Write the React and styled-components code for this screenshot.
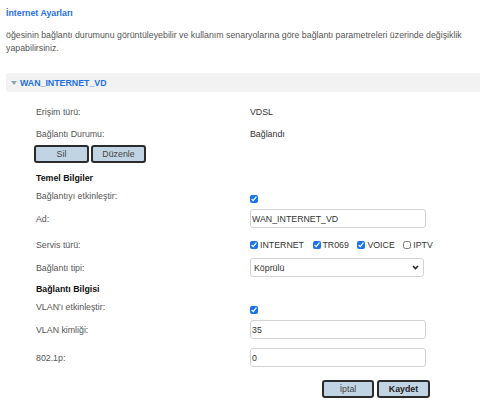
import React from 'react'
import styled, { createGlobalStyle } from 'styled-components'

const GlobalStyle = createGlobalStyle`
  body {
    margin: 0;
    background: #fff;
    font-family: "Liberation Sans", Arial, sans-serif;
    font-size: 8.8px;
    color: #555;
  }
`

const Page = styled.div`
  padding: 8px 0 20px 6px;
`

const Title = styled.h1`
  margin: 0;
  font-size: 8.8px;
  line-height: 10px;
  font-weight: bold;
  color: #1f6fe5;
`

const Desc = styled.p`
  margin: 10.5px 0 0;
  line-height: 13px;
  color: #555;
`

const Bar = styled.div`
  margin-top: 18.5px;
  height: 19px;
  background: #f2f2f2;
  border-radius: 3px 0 0 3px;
  display: flex;
  align-items: center;
  padding-left: 5px;
  gap: 3px;
`

const Caret = styled.span`
  width: 0;
  height: 0;
  border-left: 3px solid transparent;
  border-right: 3px solid transparent;
  border-top: 4px solid #8ea3bb;
  margin-top: 1px;
`

const BarTitle = styled.span`
  font-weight: bold;
  color: #1f6fe5;
`

const Form = styled.div`
  margin-left: 30px;
  padding-top: 9px;
  display: flex;
  flex-direction: column;
`

const Row = styled.div`
  display: grid;
  grid-template-columns: 214px 1fr;
  height: ${p => p.$h}px;
  margin-top: ${p => p.$mt || 0}px;
  align-items: ${p => (p.$top ? 'start' : 'center')};
`

const Label = styled.span`
  line-height: 10px;
  color: #555;
  padding-top: ${p => (p.$top ? 3 : 0)}px;
`

const Value = styled.span`
  line-height: 10px;
  color: #333;
`

const Section = styled.div`
  height: ${p => p.$h}px;
  margin-top: ${p => p.$mt || 0}px;
  display: flex;
  align-items: center;
  font-weight: bold;
  color: #111;
`

const ButtonBar = styled.div`
  display: flex;
  gap: 2px;
  height: 18px;
  margin-top: ${p => p.$mt || 0}px;
  margin-left: ${p => p.$ml || 0}px;
  width: ${p => (p.$w ? p.$w + 'px' : 'auto')};
  justify-content: ${p => p.$justify || 'flex-start'};
`

const Button = styled.button`
  width: ${p => p.$w}px;
  height: 18px;
  box-sizing: border-box;
  border: 2px solid #2b2b2b;
  border-radius: 3px;
  background: #c1d4e3;
  font-family: inherit;
  font-size: 8.8px;
  font-weight: ${p => (p.$bold ? 'bold' : 'normal')};
  color: ${p => (p.$bold ? '#222' : '#444')};
  padding: 0;
  cursor: pointer;
`

const Check = styled.input.attrs({ type: 'checkbox' })`
  width: 8px;
  height: 8px;
  margin: ${p => (p.$top ? '7px 0 0' : '0')};
  accent-color: #1a73e8;
`

const Input = styled.input`
  width: 176px;
  height: 19px;
  box-sizing: border-box;
  border: 1px solid #d3d3d3;
  border-radius: 3px;
  padding: 0 1px;
  font-family: inherit;
  font-size: 8.8px;
  color: #333;
  outline: none;
`

const SelectWrap = styled.div`
  position: relative;
  width: 174px;
  height: 19px;
`

const Select = styled.select`
  width: 100%;
  height: 100%;
  box-sizing: border-box;
  appearance: none;
  border: 1px solid #d3d3d3;
  border-radius: 3px;
  padding: 0 3px;
  background: #fff;
  font-family: inherit;
  font-size: 8.8px;
  color: #333;
  outline: none;
`

const Chevron = styled.svg`
  position: absolute;
  right: 5px;
  top: 7px;
  pointer-events: none;
`

const Services = styled.div`
  display: flex;
  align-items: center;
  gap: 8.5px;
`

const Service = styled.label`
  display: flex;
  align-items: center;
  gap: 2px;
  color: #333;
  line-height: 10px;
`

const App = () => {
  return (
    <Page>
      <GlobalStyle />
      <Title>İnternet Ayarları</Title>
      <Desc>
        öğesinin bağlantı durumunu görüntüleyebilir ve kullanım senaryolarına göre bağlantı parametreleri üzerinde değişiklik yapabilirsiniz.
      </Desc>
      <Bar>
        <Caret />
        <BarTitle>WAN_INTERNET_VD</BarTitle>
      </Bar>
      <Form>
        <Row $h={22}>
          <Label>Erişim türü:</Label>
          <Value>VDSL</Value>
        </Row>
        <Row $h={22}>
          <Label>Bağlantı Durumu:</Label>
          <Value>Bağlandı</Value>
        </Row>
        <ButtonBar $ml={-2}>
          <Button $w={55}>Sil</Button>
          <Button $w={55}>Düzenle</Button>
        </ButtonBar>
        <Section $h={20} $mt={5}>Temel Bilgiler</Section>
        <Row $h={21} $top>
          <Label $top>Bağlantıyı etkinleştir:</Label>
          <div><Check $top defaultChecked /></div>
        </Row>
        <Row $h={19}>
          <Label>Ad:</Label>
          <Input defaultValue="WAN_INTERNET_VD" />
        </Row>
        <Row $h={18} $mt={8}>
          <Label>Servis türü:</Label>
          <Services>
            <Service><Check defaultChecked />INTERNET</Service>
            <Service><Check defaultChecked />TR069</Service>
            <Service><Check defaultChecked />VOICE</Service>
            <Service><Check />IPTV</Service>
          </Services>
        </Row>
        <Row $h={19} $mt={4}>
          <Label>Bağlantı tipi:</Label>
          <SelectWrap>
            <Select defaultValue="kopru">
              <option value="kopru">Köprülü</option>
              <option value="yonlendirme">Yönlendirmeli</option>
            </Select>
            <Chevron width="7" height="5" viewBox="0 0 7 5">
              <path d="M1 1 L3.5 3.5 L6 1" fill="none" stroke="#222" strokeWidth="1.6" />
            </Chevron>
          </SelectWrap>
        </Row>
        <Section $h={20} $mt={2}>Bağlantı Bilgisi</Section>
        <Row $h={21} $top>
          <Label $top>VLAN'ı etkinleştir:</Label>
          <div><Check $top defaultChecked /></div>
        </Row>
        <Row $h={19}>
          <Label>VLAN kimliği:</Label>
          <Input defaultValue="35" />
        </Row>
        <Row $h={19} $mt={9}>
          <Label>802.1p:</Label>
          <Input defaultValue="0" />
        </Row>
        <ButtonBar $mt={13} $w={394} $justify="flex-end" style={{ gap: 3 }}>
          <Button $w={52}>İptal</Button>
          <Button $w={53} $bold>Kaydet</Button>
        </ButtonBar>
      </Form>
    </Page>
  )
}

export default App
